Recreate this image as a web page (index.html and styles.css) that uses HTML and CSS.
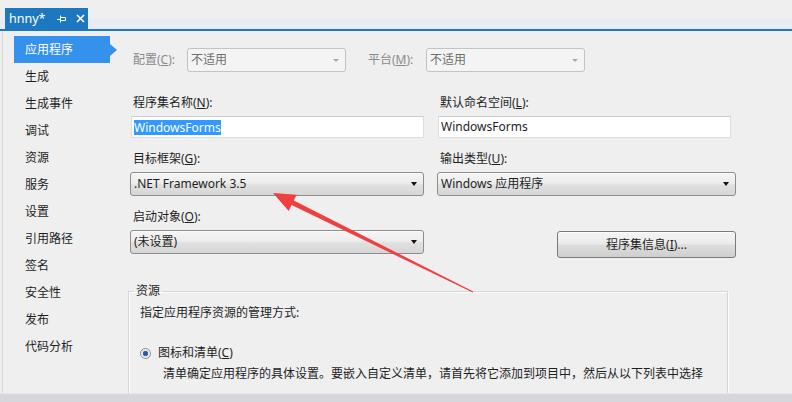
FILE: index.html
```html
<!DOCTYPE html>
<html lang="zh-CN">
<head>
<meta charset="utf-8">
<title>hnny* - 应用程序</title>
<link rel="stylesheet" href="styles.css">
</head>
<body>
<div class="window">
  <div class="tabstrip">
    <div class="tab">
      <span class="tab-title">hnny*</span>
      <svg class="tab-pin" width="10" height="8" viewBox="0 0 10 8"><path d="M0 4.5H3M3.5 0.5V7.5M3.5 2.5H8.5V5.5H3.5" fill="none" stroke="#fff" stroke-width="1"/></svg>
      <svg class="tab-close" width="9" height="9" viewBox="0 0 9 9"><path d="M1 1L8 8M8 1L1 8" stroke="#fff" stroke-width="1.6"/></svg>
    </div>
  </div>
  <div class="workspace">
    <nav class="sidenav">
      <div class="nav-item active">应用程序</div>
      <div class="nav-item">生成</div>
      <div class="nav-item">生成事件</div>
      <div class="nav-item">调试</div>
      <div class="nav-item">资源</div>
      <div class="nav-item">服务</div>
      <div class="nav-item">设置</div>
      <div class="nav-item">引用路径</div>
      <div class="nav-item">签名</div>
      <div class="nav-item">安全性</div>
      <div class="nav-item">发布</div>
      <div class="nav-item">代码分析</div>
    </nav>
    <main class="page">
      <div class="config-row">
        <span class="config-label dim">配置(<u>C</u>):</span>
        <div class="combo combo-small disabled"><span>不适用</span><i class="caret"></i></div>
        <span class="config-label platform dim">平台(<u>M</u>):</span>
        <div class="combo combo-small disabled"><span>不适用</span><i class="caret"></i></div>
      </div>
      <div class="form-grid">
        <div class="field">
          <span class="field-label">程序集名称(<u>N</u>):</span>
          <div class="textbox"><span class="selected-text">WindowsForms</span></div>
        </div>
        <div class="field">
          <span class="field-label">默认命名空间(<u>L</u>):</span>
          <div class="textbox">WindowsForms</div>
        </div>
        <div class="field">
          <span class="field-label">目标框架(<u>G</u>):</span>
          <div class="combo"><span>.NET Framework 3.5</span><i class="caret"></i></div>
        </div>
        <div class="field">
          <span class="field-label">输出类型(<u>U</u>):</span>
          <div class="combo combo-wide"><span>Windows 应用程序</span><i class="caret"></i></div>
        </div>
        <div class="field">
          <span class="field-label">启动对象(<u>O</u>):</span>
          <div class="combo"><span>(未设置)</span><i class="caret"></i></div>
        </div>
        <div class="field">
          <div class="button">程序集信息(<u>I</u>)...</div>
        </div>
      </div>
      <fieldset class="group">
        <legend>资源</legend>
        <div class="group-intro">指定应用程序资源的管理方式:</div>
        <div class="radio-row"><span class="radio checked"></span><span>图标和清单(<u>C</u>)</span></div>
        <div class="radio-desc">清单确定应用程序的具体设置。要嵌入自定义清单，请首先将它添加到项目中，然后从以下列表中选择</div>
      </fieldset>
    </main>
  </div>
  <div class="hscroll"></div>
  <svg class="annot-arrow" width="792" height="402" viewBox="0 0 792 402">
    <polygon points="273,193 296.7,194.7 293.8,200.6 473.3,291.4 472.7,292.6 291.6,205 288.7,210.9" fill="#ee4040"/>
  </svg>
</div>
</body>
</html>
```

FILE: styles.css
```css
html, body {
  margin: 0;
  padding: 0;
}
body {
  width: 792px;
  height: 402px;
  overflow: hidden;
  background: #efeff0;
  color: #1e1e1e;
  font-family: "Noto Sans", "Noto Sans CJK SC", sans-serif;
  font-size: 12px;
  line-height: 16px;
}
u { text-decoration: underline; text-underline-offset: 1px; }

.window {
  position: relative;
  height: 402px;
  display: flex;
  flex-direction: column;
}

/* tab strip */
.tabstrip {
  height: 29px;
  flex-shrink: 0;
  border-bottom: 2px solid #1e78c0;
  display: flex;
  align-items: flex-end;
  padding-left: 5px;
  background: linear-gradient(#efeff0 0, #efeff0 19px, #e9ecf3 19px, #e9ecf3 29px);
}
.tab {
  width: 83px;
  height: 21px;
  box-sizing: border-box;
  background: #1e78c0;
  color: #fff;
  display: flex;
  align-items: center;
  padding-left: 4px;
}
.tab-title {
  font-size: 12.5px;
  line-height: 16px;
}
.tab-pin { margin-left: 12px; }
.tab-close { margin-left: 9px; }

/* workspace */
.workspace {
  flex: 1;
  min-height: 0;
  display: flex;
  overflow: hidden;
}
.sidenav {
  width: 126px;
  margin-left: 2px;
  flex-shrink: 0;
  box-sizing: border-box;
  border-left: 1px solid #d9d9dc;
  padding-top: 5px;
}
.nav-item {
  width: 96px;
  height: 27px;
  line-height: 27px;
  margin-left: 11px;
  padding-left: 11px;
  box-sizing: border-box;
  white-space: nowrap;
}
.nav-item.active {
  position: relative;
  background: #3592ec;
  color: #fff;
}
.nav-item.active::after {
  content: "";
  position: absolute;
  right: -7px;
  top: 8px;
  border-left: 7px solid #3592ec;
  border-top: 6px solid transparent;
  border-bottom: 6px solid transparent;
}

.page {
  flex: 1;
  padding-top: 17px;
  min-width: 0;
}

/* config row */
.config-row {
  display: flex;
  align-items: center;
  height: 24px;
  margin-left: 5px;
}
.config-label {
  width: 54px;
  white-space: nowrap;
}
.config-label.platform {
  margin-left: 22px;
  width: 58px;
}
.dim { color: #8a8a8a; }

/* combos */
.combo {
  width: 294px;
  height: 24px;
  box-sizing: border-box;
  border: 1px solid #8d8d8d;
  border-radius: 3px;
  background: linear-gradient(#f5f5f5 0%, #ededed 45%, #e0e0e0 55%, #d6d6d6 100%);
  box-shadow: inset 0 1px 0 #fbfbfb;
  display: flex;
  align-items: center;
  padding-left: 3px;
  white-space: nowrap;
}
.combo-wide { width: 299px; }
.combo-small { width: 159px; }
.caret {
  margin-left: auto;
  margin-right: 6px;
  width: 0;
  height: 0;
  border-top: 4px solid #111;
  border-left: 3.5px solid transparent;
  border-right: 3.5px solid transparent;
}
.combo.disabled {
  background: #f4f4f4;
  border-color: #c3c3c3;
  box-shadow: none;
  color: #6d6d6d;
}
.combo.disabled .caret {
  border-top-color: #a8a8a8;
  border-top-width: 3px;
  border-left-width: 3px;
  border-right-width: 3px;
}

/* form grid */
.form-grid {
  margin-top: 23px;
  margin-left: 2px;
  display: grid;
  grid-template-columns: 294px 299px;
  column-gap: 13px;
  row-gap: 13px;
}
.field {
  display: flex;
  flex-direction: column;
}
.field-label {
  padding-left: 3px;
  margin-bottom: 5px;
  white-space: nowrap;
}
.textbox {
  width: 293px;
  height: 22px;
  margin-left: 1px;
  box-sizing: border-box;
  background: #fff;
  border: 1px solid #dedede;
  border-top-color: #cdcdcd;
  display: flex;
  align-items: center;
  padding-left: 2px;
  white-space: nowrap;
}
.selected-text {
  background: #3399ff;
  color: #fff;
  line-height: 15px;
}
.button {
  margin-top: 22px;
  margin-left: 120px;
  width: 179px;
  height: 27px;
  box-sizing: border-box;
  border: 1px solid #7a7a7a;
  border-radius: 3px;
  background: linear-gradient(#f4f4f4 0%, #ebebeb 48%, #dddddd 52%, #cfcfcf 100%);
  box-shadow: inset 0 1px 0 #fcfcfc;
  display: flex;
  align-items: center;
  justify-content: center;
}

/* group box */
.group {
  margin: 25px 0 0 0;
  width: 600px;
  height: 160px;
  box-sizing: border-box;
  border: 1px solid #d6d6d6;
  box-shadow: inset 1px 1px 0 #fdfdfd, 1px 1px 0 #fdfdfd;
  padding: 0 0 0 11px;
  min-width: 0;
}
.group legend {
  padding: 0 2px;
  margin-left: -6px;
  line-height: 16px;
}
.group-intro {
  margin-top: 6px;
}
.radio-row {
  margin-top: 24px;
  display: flex;
  align-items: center;
  gap: 7px;
}
.radio {
  width: 11px;
  height: 11px;
  box-sizing: border-box;
  border-radius: 50%;
  border: 1px solid #8e8f8f;
  background: radial-gradient(circle, #1d4f8e 0, #3a6fb8 2.5px, #e4e4e4 3px, #f6f6f6 5px);
}
.radio-desc {
  margin-top: 5px;
  padding-left: 23px;
  white-space: nowrap;
}

/* bottom scroll strip */
.hscroll {
  height: 8px;
  flex-shrink: 0;
  background: #d6d6dd;
  border-top: 1px solid #e6e6eb;
}

/* annotation overlay */
.annot-arrow {
  position: absolute;
  left: 0;
  top: 0;
  pointer-events: none;
}
```
